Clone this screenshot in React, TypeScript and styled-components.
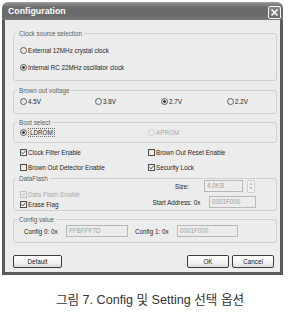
import React from 'react';
import styled, { createGlobalStyle, css } from 'styled-components';

const GlobalStyle = createGlobalStyle`
  html, body { margin: 0; padding: 0; background: #ffffff; }
  body { font-family: "Liberation Sans", Arial, sans-serif; }
  * { box-sizing: border-box; }
`;

const Page = styled.div`
  width: 290px;
  height: 313px;
  display: flex;
  flex-direction: column;
`;

const Window = styled.div`
  width: 281px;
  height: 273px;
  margin: 2px 0 0 2px;
  display: flex;
  flex-direction: column;
`;

const TitleBar = styled.div`
  height: 18px;
  flex: none;
  display: flex;
  align-items: center;
  justify-content: space-between;
  padding: 0 2px 0 6px;
  border-radius: 6px 6px 0 0;
  background: linear-gradient(to bottom, #a4a4a4 0px, #848484 2px, #6c6c6c 6px, #686868 12px, #767676 18px);
`;

const Title = styled.span`
  color: #ffffff;
  font-size: 8.8px;
  font-weight: bold;
`;

const CloseButton = styled.div`
  width: 13px;
  height: 13px;
  margin-top: 3px;
  border: 1px solid #f2f2f2;
  border-radius: 2px;
  background: linear-gradient(#8a8a8a, #6a6a6a);
  display: flex;
  align-items: center;
  justify-content: center;
`;

const Body = styled.div`
  flex: 1;
  display: flex;
  flex-direction: column;
  padding: 13px 3px 0 8px;
  background: #ececec;
  border: 3px solid #5a5a5a;
  border-top: none;
  font-size: 6.3px;
  color: #262626;
`;

const Group = styled.div<{ $h: number; $mt?: number; $pt: number; $pl?: number }>`
  position: relative;
  height: ${p => p.$h}px;
  margin-top: ${p => p.$mt ?? 0}px;
  padding: ${p => p.$pt}px 0 0 ${p => p.$pl ?? 6}px;
  border: 1px solid #d0d0d0;
  border-radius: 3px;
`;

const Legend = styled.span`
  position: absolute;
  top: -5px;
  left: 3px;
  padding: 0 2px;
  line-height: 9px;
  background: #ececec;
  color: #5e5e5e;
`;

const Stack = styled.div<{ $gap: number }>`
  display: flex;
  flex-direction: column;
  gap: ${p => p.$gap}px;
`;

const Columns = styled.div<{ $cols: string; $mt?: number; $pl?: number }>`
  display: grid;
  grid-template-columns: ${p => p.$cols};
  margin-top: ${p => p.$mt ?? 0}px;
  padding-left: ${p => p.$pl ?? 0}px;
`;

const Option = styled.div<{ $disabled?: boolean }>`
  height: 10px;
  display: flex;
  align-items: center;
  gap: 1px;
  white-space: nowrap;
  color: ${p => (p.$disabled ? '#ababab' : '#262626')};
`;

const Radio = styled.span<{ $on?: boolean; $disabled?: boolean }>`
  width: 7px;
  height: 7px;
  flex: none;
  border-radius: 50%;
  border: 1px solid ${p => (p.$disabled ? '#cdcdcd' : '#5f5f5f')};
  background: ${p => (p.$disabled ? '#ececec' : 'linear-gradient(135deg, #d6d6d6, #ffffff)')};
  ${p =>
    p.$on &&
    css`
      background: radial-gradient(circle, #3a3a3a 0 1.2px, #cfcfcf 1.5px, #fbfbfb 2.6px);
    `}
`;

const Box = styled.span<{ $disabled?: boolean }>`
  width: 7px;
  height: 7px;
  flex: none;
  display: flex;
  align-items: center;
  justify-content: center;
  border: 1px solid ${p => (p.$disabled ? '#c4c4c4' : '#4e4e4e')};
  background: ${p => (p.$disabled ? '#ececec' : 'linear-gradient(135deg, #dcdcdc, #ffffff)')};
`;

const Focus = styled.span`
  display: inline-block;
  height: 9px;
  padding: 0 1px;
  line-height: 7px;
  border: 1px dotted #6a6a6a;
`;

const FlashLayout = styled.div`
  display: flex;
  justify-content: space-between;
  padding-right: 20px;
`;

const FieldRows = styled.div`
  display: flex;
  flex-direction: column;
  gap: 4px;
  margin-top: -9px;
`;

const FieldRow = styled.div`
  height: 12px;
  display: flex;
  align-items: center;
`;

const Label = styled.span<{ $w: number; $right?: boolean; $ml?: number }>`
  width: ${p => p.$w}px;
  margin-left: ${p => p.$ml ?? 0}px;
  flex: none;
  white-space: nowrap;
  text-align: ${p => (p.$right ? 'right' : 'left')};
`;

const Input = styled.div<{ $w: number; $ml?: number }>`
  width: ${p => p.$w}px;
  height: 12px;
  margin-left: ${p => p.$ml ?? 0}px;
  flex: none;
  padding-left: 2px;
  line-height: 10px;
  border: 1px solid #b8b8b8;
  background: #ececec;
  color: #a2a2a2;
  white-space: nowrap;
`;

const Spinner = styled.div`
  width: 8px;
  height: 13px;
  margin-left: 4px;
  flex: none;
  display: flex;
  flex-direction: column;
  align-items: center;
  justify-content: space-around;
  border: 1px solid #cfcfcf;
  border-radius: 1px;
  background: #f1f1f1;
`;

const ButtonRow = styled.div`
  display: flex;
  justify-content: space-between;
  margin-top: 12px;
  padding-right: 3px;
`;

const ButtonGroup = styled.div`
  display: flex;
  gap: 3px;
`;

const Button = styled.div<{ $w: number }>`
  width: ${p => p.$w}px;
  height: 13px;
  display: flex;
  align-items: center;
  justify-content: center;
  border: 1px solid #3c3c3c;
  border-radius: 2px;
  background: linear-gradient(#ffffff, #f2f2f2 60%, #dcdcdc);
  color: #222222;
`;

const Caption = styled.div`
  margin-top: 18px;
  padding-left: 10px;
  width: 290px;
  text-align: center;
  font-family: "Liberation Sans", "Noto Sans CJK KR", sans-serif;
  font-size: 12.6px;
  line-height: 14px;
  color: #333333;
`;

const Check = ({ disabled }: { disabled?: boolean }) => (
  <svg width="5" height="5" viewBox="0 0 5 5">
    <path d="M0.6 2.4 L2 3.8 L4.5 0.9" fill="none" stroke={disabled ? '#b4b4b4' : '#3a3a3a'} strokeWidth="0.9" />
  </svg>
);

const Arrow = ({ up }: { up?: boolean }) => (
  <svg width="4" height="3" viewBox="0 0 4 3">
    <path d={up ? 'M0 3 L2 0.6 L4 3 Z' : 'M0 0 L2 2.4 L4 0 Z'} fill="#c4c4c4" />
  </svg>
);

type OptProps = { label: React.ReactNode; on?: boolean; disabled?: boolean };

const RadioOption = ({ label, on, disabled }: OptProps) => (
  <Option $disabled={disabled}>
    <Radio $on={on} $disabled={disabled} />
    {label}
  </Option>
);

const CheckOption = ({ label, on, disabled }: OptProps) => (
  <Option $disabled={disabled}>
    <Box $disabled={disabled}>{on && <Check disabled={disabled} />}</Box>
    {label}
  </Option>
);

const App = () => {
  return (
    <Page>
      <GlobalStyle />
      <Window>
        <TitleBar>
          <Title>Configuration</Title>
          <CloseButton>
            <svg width="9" height="9" viewBox="0 0 9 9">
              <path d="M1.5 1.5 L7.5 7.5 M7.5 1.5 L1.5 7.5" stroke="#ffffff" strokeWidth="1.6" />
            </svg>
          </CloseButton>
        </TitleBar>
        <Body>
          <Group $h={48} $pt={11}>
            <Legend>Clock source selection</Legend>
            <Stack $gap={7}>
              <RadioOption label="External 12MHz crystal clock" />
              <RadioOption label="Internal RC 22MHz oscillator clock" on />
            </Stack>
          </Group>

          <Group $h={24} $mt={9} $pt={5}>
            <Legend>Brown out voltage</Legend>
            <Columns $cols="75px 66px 66px auto">
              <RadioOption label="4.5V" />
              <RadioOption label="3.8V" />
              <RadioOption label="2.7V" on />
              <RadioOption label="2.2V" />
            </Columns>
          </Group>

          <Group $h={21} $mt={8} $pt={4}>
            <Legend>Boot select</Legend>
            <Columns $cols="128px auto">
              <RadioOption label={<Focus>LDROM</Focus>} on />
              <RadioOption label="APROM" disabled />
            </Columns>
          </Group>

          <Columns $cols="128px auto" $mt={4} $pl={7}>
            <Stack $gap={5}>
              <CheckOption label="Clock Filter Enable" on />
              <CheckOption label="Brown Out Detector Enable" />
            </Stack>
            <Stack $gap={5}>
              <CheckOption label="Brown Out Reset Enable" />
              <CheckOption label="Security Lock" on />
            </Stack>
          </Columns>

          <Group $h={33} $mt={6} $pt={10}>
            <Legend>DataFlash</Legend>
            <FlashLayout>
              <Stack $gap={0}>
                <CheckOption label="Data Flash Enable" on disabled />
                <CheckOption label="Erase Flag" on />
              </Stack>
              <FieldRows>
                <FieldRow>
                  <Label $w={43} $right>Size:</Label>
                  <Input $w={39} $ml={15}>4.0KB</Input>
                  <Spinner>
                    <Arrow up />
                    <Arrow />
                  </Spinner>
                </FieldRow>
                <FieldRow>
                  <Label $w={46} $right>Start Address:</Label>
                  <Label $w={17}>&nbsp;0x</Label>
                  <Input $w={47}>0001F000</Input>
                </FieldRow>
              </FieldRows>
            </FlashLayout>
          </Group>

          <Group $h={24} $mt={8} $pt={5} $pl={10}>
            <Legend>Config value</Legend>
            <FieldRow>
              <Label $w={42}>Config 0: 0x</Label>
              <Input $w={62}>FFBFFF7D</Input>
              <Label $w={42} $ml={7}>Config 1: 0x</Label>
              <Input $w={61}>0001F000</Input>
            </FieldRow>
          </Group>

          <ButtonRow>
            <Button $w={49}>Default</Button>
            <ButtonGroup>
              <Button $w={42}>OK</Button>
              <Button $w={42}>Cancel</Button>
            </ButtonGroup>
          </ButtonRow>
        </Body>
      </Window>
      <Caption>그림 7. Config 및 Setting 선택 옵션</Caption>
    </Page>
  );
};

export default App;
